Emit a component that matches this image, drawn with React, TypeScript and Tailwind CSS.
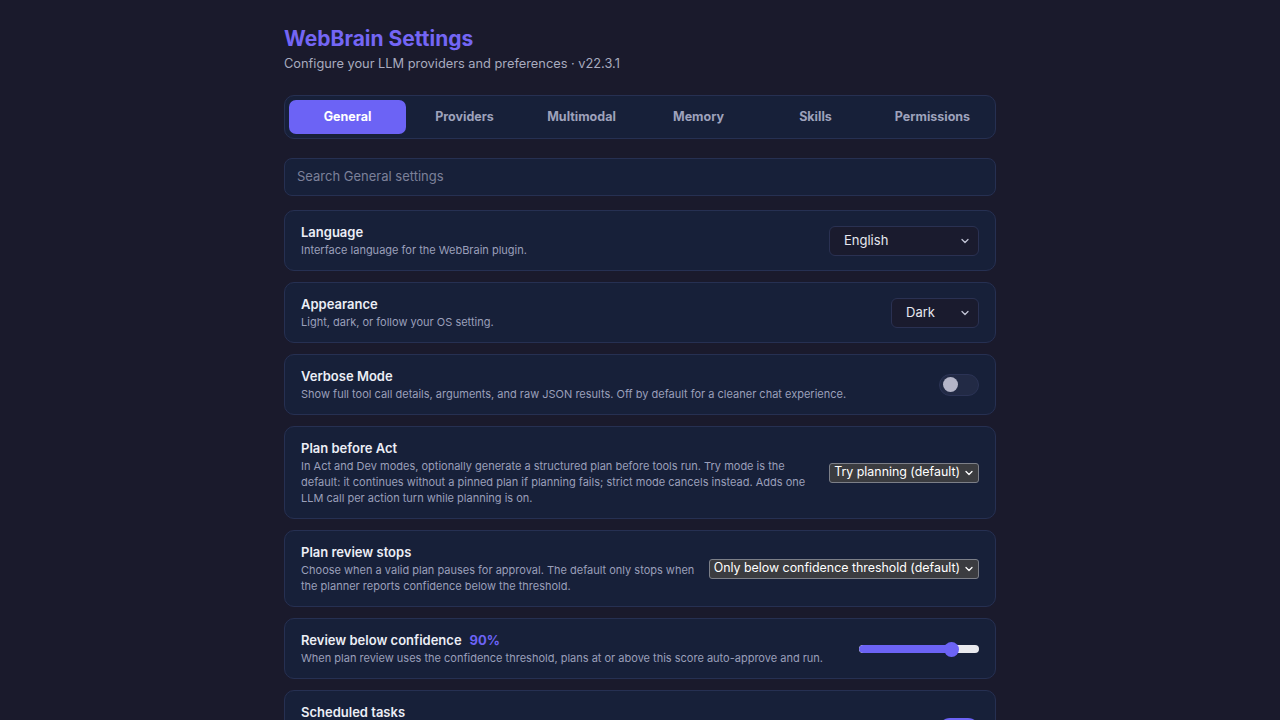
import React from "react";

const Chevron = ({ className = "" }: { className?: string }) => (
  <svg width="10" height="10" viewBox="0 0 10 10" className={className} fill="none" stroke="currentColor" strokeWidth="1.3">
    <path d="M2 3.5 L5 6.5 L8 3.5" strokeLinecap="round" strokeLinejoin="round" />
  </svg>
);

const Card = ({ children, className = "" }: { children: React.ReactNode; className?: string }) => (
  <div className={`flex items-center justify-between gap-4 rounded-[10px] border border-[#263052] bg-[#172039] px-4 py-3 ${className}`}>
    {children}
  </div>
);

const Text = ({ title, desc, extra }: { title: string; desc: string; extra?: React.ReactNode }) => (
  <div className="flex min-w-0 flex-1 flex-col">
    <div className="text-[13px] font-semibold leading-[18px] text-[#eceef6]">
      {title}
      {extra}
    </div>
    <div className="mt-[1px] text-[11px] leading-4 text-[#9a9fba]">{desc}</div>
  </div>
);

const StyledSelect = ({ value, width }: { value: string; width: string }) => (
  <div className={`flex h-[30px] ${width} shrink-0 items-center justify-between rounded-md border border-[#2a3152] bg-[#1a1b2e] pl-[14px] pr-2 text-[13px] text-[#e6e7ef]`}>
    <span>{value}</span>
    <Chevron className="text-[#c0c3d4]" />
  </div>
);

const NativeSelect = ({ value }: { value: string }) => (
  <div className="flex h-[20px] shrink-0 items-center gap-[4px] whitespace-nowrap rounded-[3px] border border-[#7c7f88] bg-[#3b3c40] pl-1 pr-1 text-[12.4px] leading-none text-white">
    <span>{value}</span>
    <Chevron className="text-white" />
  </div>
);

export default function App() {
  const tabs = ["General", "Providers", "Multimodal", "Memory", "Skills", "Permissions"];
  return (
    <div className="min-h-screen w-full bg-[#1a1a2c]" style={{ fontFamily: "Inter, 'Noto Sans', sans-serif" }}>
      <div className="mx-auto w-[712px] pt-[25px]">
        <h1 className="text-[21px] font-bold leading-7 text-[#7466f5]">WebBrain Settings</h1>
        <p className="mt-[1px] text-[12.8px] leading-5 text-[#a8abbf]">Configure your LLM providers and preferences · v22.3.1</p>

        <div className="mt-[21px] grid grid-cols-6 rounded-[10px] border border-[#263052] bg-[#172039] p-1">
          {tabs.map((t, i) => (
            <div
              key={t}
              className={`flex h-[34px] items-center justify-center rounded-[7px] text-[12.5px] font-bold ${
                i === 0 ? "bg-[#6c63f5] text-white" : "text-[#9ea2bc]"
              }`}
            >
              {t}
            </div>
          ))}
        </div>

        <div className="mt-[19px] flex h-[38px] items-center rounded-[8px] border border-[#263052] bg-[#172039] px-3 text-[13px] text-[#7c8099]">
          Search General settings
        </div>

        <div className="mt-[14px] flex flex-col gap-[11px]">
          <Card>
            <Text title="Language" desc="Interface language for the WebBrain plugin." />
            <StyledSelect value="English" width="w-[150px]" />
          </Card>
          <Card>
            <Text title="Appearance" desc="Light, dark, or follow your OS setting." />
            <StyledSelect value="Dark" width="w-[88px]" />
          </Card>
          <Card>
            <Text
              title="Verbose Mode"
              desc="Show full tool call details, arguments, and raw JSON results. Off by default for a cleaner chat experience."
            />
            <div className="flex h-[22px] w-[40px] shrink-0 items-center rounded-full border border-[#2b3355] bg-[#222a45] px-[3px]">
              <div className="h-[15px] w-[15px] rounded-full bg-[#b4b5c8]" />
            </div>
          </Card>
          <Card>
            <Text
              title="Plan before Act"
              desc="In Act and Dev modes, optionally generate a structured plan before tools run. Try mode is the default: it continues without a pinned plan if planning fails; strict mode cancels instead. Adds one LLM call per action turn while planning is on."
            />
            <NativeSelect value="Try planning (default)" />
          </Card>
          <Card className="!gap-3">
            <Text
              title="Plan review stops"
              desc="Choose when a valid plan pauses for approval. The default only stops when the planner reports confidence below the threshold."
            />
            <NativeSelect value="Only below confidence threshold (default)" />
          </Card>
          <Card>
            <Text
              title="Review below confidence"
              extra={<span className="ml-2 font-bold text-[#6c63f5]">90%</span>}
              desc="When plan review uses the confidence threshold, plans at or above this score auto-approve and run."
            />
            <div className="relative flex h-[14px] w-[120px] shrink-0 items-center">
              <div className="h-[8px] w-full overflow-hidden rounded-full bg-[#e9e9ee]">
                <div className="h-full rounded-full bg-[#6c63f5]" style={{ width: "78%" }} />
              </div>
              <div className="absolute left-[85px] top-0 h-[15px] w-[15px] rounded-full bg-[#6c63f5]" />
            </div>
          </Card>
          <Card>
            <Text
              title="Scheduled tasks"
              desc="Let WebBrain run saved prompts on a schedule in the background. Tasks only run while the browser is open and use your default provider and model settings for every run."
            />
            <div className="flex h-[22px] w-[40px] shrink-0 items-center justify-end rounded-full bg-[#6c63f5] px-[3px]">
              <div className="h-[15px] w-[15px] rounded-full bg-white" />
            </div>
          </Card>
        </div>
        <div className="h-10" />
      </div>
    </div>
  );
}
